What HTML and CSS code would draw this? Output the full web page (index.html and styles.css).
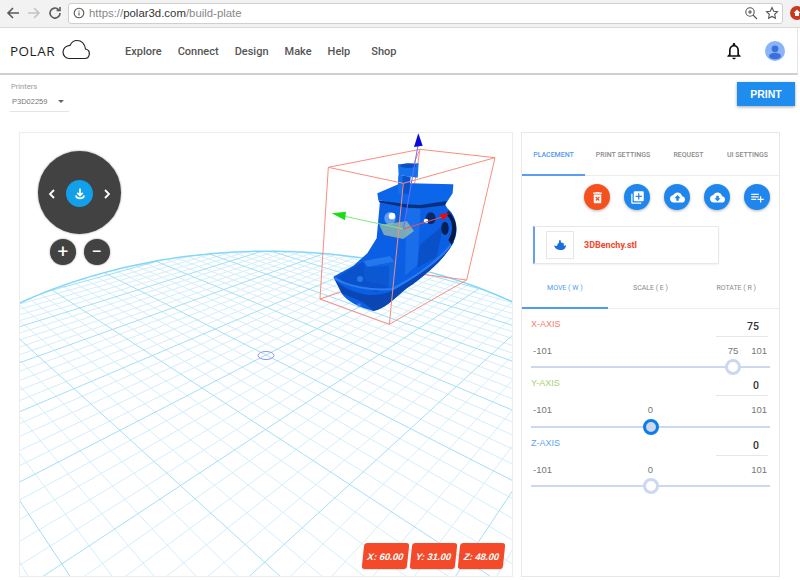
FILE: index.html
```html
<!DOCTYPE html>
<html lang="en">
<head>
<meta charset="utf-8">
<title>Polar3D build plate</title>
<link rel="stylesheet" href="styles.css">
</head>
<body>
<header class="chrome">
  <div class="chrome-nav">
    <svg class="ci" viewBox="0 0 16 16"><path d="M14 8H3M8 3L3 8l5 5" class="st-dark"/></svg>
    <svg class="ci" viewBox="0 0 16 16"><path d="M2 8h11M8 3l5 5-5 5" class="st-light"/></svg>
    <svg class="ci" viewBox="0 0 16 16"><path d="M13 8a5 5 0 1 1-1.500-3.500M13 2v3.400H9.600" class="st-dark"/></svg>
  </div>
  <div class="url">
    <svg class="info" viewBox="0 0 12 12"><circle cx="6" cy="6" r="4.800" class="st-thin"/><path d="M6 5.400v3.200M6 3.400v1" class="st-thin"/></svg>
    <span class="url-text"><span class="url-dim">https://</span>polar3d.com<span class="url-dim">/build-plate</span></span>
    <span class="url-icons">
      <svg class="ui" viewBox="0 0 14 14"><circle cx="6" cy="6" r="4.200" class="st-thin"/><path d="M9 9l4 4M4 6h4M6 4v4" class="st-thin"/></svg>
      <svg class="ui" viewBox="0 0 14 14"><path d="M7 1.600l1.700 3.600 3.800.5-2.800 2.600.7 3.900L7 10.400l-3.400 1.800.7-3.900-2.800-2.600 3.800-.5z" class="st-thin"/></svg>
    </span>
  </div>
  <div class="ext"><svg viewBox="0 0 10 10" class="ext-i"><path d="M5 1.500L8.500 5H7v3H3V5H1.500z" fill="#fff"/></svg></div>
</header>

<nav class="topnav">
  <a class="logo"><span class="logo-text">POLAR</span>
    <svg class="cloud" viewBox="0 0 28 21"><path d="M7 19.500h15.500a4.800 4.800 0 0 0 1-9.500C22.500 4.500 19 1.500 15 1.500c-3 0-5.500 1.700-7 4.800C4 6.500 1 9.500 1 13s2.800 6.500 6 6.500z"/></svg>
  </a>
  <ul class="menu">
    <li>Explore</li><li>Connect</li><li>Design</li><li>Make</li><li>Help</li><li class="menu-last">Shop</li>
  </ul>
  <svg class="bell" viewBox="0 0 24 24"><path d="M12 22c1.100 0 2-.9 2-2h-4c0 1.100.9 2 2 2zm6-6v-5c0-3.070-1.630-5.640-4.500-6.320V4c0-.83-.67-1.500-1.500-1.500s-1.500.67-1.500 1.500v.68C7.640 5.360 6 7.920 6 11v5l-2 2v1h16v-1l-2-2zm-2 1H8v-6c0-2.480 1.510-4.500 4-4.500s4 2.020 4 4.500v6z"/></svg>
  <span class="avatar"><svg viewBox="0 0 20 20"><circle cx="10" cy="10" r="10" fill="#8ab4f8"/><circle cx="10" cy="7.800" r="3.400" fill="#3b6fdc"/><ellipse cx="10" cy="15" rx="6" ry="3.200" fill="#3b6fdc"/></svg></span>
</nav>

<section class="subbar">
  <div class="printer">
    <div class="printer-label">Printers</div>
    <div class="printer-select"><span>P3D02259</span><i class="caret"></i></div>
  </div>
  <button class="print">PRINT</button>
</section>

<main class="main">
  <section class="stage">
    <svg id="plate" class="plate" viewBox="19 132 494 445">
      <g id="grid" fill="none"></g>
      <ellipse cx="266" cy="355.500" rx="8" ry="4" fill="none" stroke="#8f8fff"/>
      <g transform="translate(310 125) scale(.33333)">
        <g fill="none" stroke="#f98d80" stroke-width="3">
          <path d="M330 73L290 165M30 522L272 440L470 465M272 440L330 73"/>
        </g>
        <g class="model">
          <!-- hull -->
          <path d="M70 455L130 422L172 385L200 340L210 228L290 245L330 247L405 238L412 250C442 275 447 320 430 352C410 395 350 450 290 490C255 520 220 555 190 558C150 548 110 530 95 505Z" fill="#0b5fe4"/>
          <!-- deck -->
          <path d="M84 456L158 410L250 480L200 500L110 478Z" fill="#0a52cc"/>
          <!-- lower hull -->
          <path d="M95 505C130 520 165 530 190 558C220 555 255 520 290 490C350 450 410 395 430 352C395 400 330 450 248 498C215 510 180 515 150 505C130 500 100 490 74 462Z" fill="#0a47b4"/>
          <path d="M74 460C110 482 180 498 248 492C330 448 395 400 430 350" fill="none" stroke="#2a7cf0" stroke-width="6"/>
          <!-- box on deck -->
          <path d="M160 408L240 393L254 410L250 487L165 468Z" fill="#0c58d2"/>
          <path d="M160 408L240 393L254 410L172 426Z" fill="#2577ee"/>
          <path d="M172 426L254 410L250 487L236 484L238 422Z" fill="#0f66e2"/>
          <!-- cabin -->
          <path d="M290 250L332 250L322 420L285 452Z" fill="#1a6eea"/>
          <path d="M330 360L400 300L380 395L322 428Z" fill="#0a50c8"/>
          <!-- roof -->
          <path d="M202 205L265 178L300 175L430 178L428 205L405 240L330 247L290 243L205 225Z" fill="#0c66ea"/>
          <path d="M205 226L290 238L330 240L410 228L405 241L330 250L290 248L208 232Z" fill="#06307e"/>
          <!-- chimney -->
          <path d="M266 150L302 155L297 206L262 206Z" fill="#0a52cc"/>
          <path d="M266 150L278 152L276 206L262 206Z" fill="#1670ee"/>
          <path d="M264 118L326 115L323 158L266 150Z" fill="#1470ec"/>
          <ellipse cx="295" cy="122" rx="24" ry="7" fill="#0b50c0"/>
          <!-- openings -->
          <ellipse cx="240" cy="280" rx="17" ry="19" fill="#5d9df0"/>
          <ellipse cx="246" cy="273" rx="10" ry="10" fill="#fff"/>
          <ellipse cx="362" cy="280" rx="15" ry="18" fill="#08286a"/>
          <circle cx="348" cy="288" r="7" fill="#fff"/>
          <ellipse cx="405" cy="310" rx="11" ry="20" fill="#072054"/>
          <path d="M415 258C442 285 447 320 425 360L415 345C430 320 432 290 408 268Z" fill="#061a45"/>
          <circle cx="150" cy="462" r="9" fill="#2a78e8"/>
          <circle cx="147" cy="540" r="5" fill="#3a86ee"/>
          <path d="M208 300L290 288L312 318L280 342L222 330Z" fill="#a8c8a8" opacity=".7"/>
        </g>
        <g fill="none" stroke="#f98d80" stroke-width="3">
          <path d="M55 127L330 73L555 98L470 465L238 598L30 522ZM55 127L280 175L555 98M280 175L238 598"/>
        </g>
        <path d="M280 312L325 55" stroke="#6d6dff" stroke-width="3"/>
        <path d="M325 25L312 66L338 62Z" fill="#0a0ad8"/>
        <path d="M280 312L95 272" stroke="#7de87d" stroke-width="3"/>
        <path d="M65 265L108 260L105 286Z" fill="#1cdc1c"/>
        <path d="M280 312L400 275" stroke="#e85555" stroke-width="3"/>
        <path d="M388 268L419 264L400 286Z" fill="#ee0a0a"/>
      </g>
    </svg>

    <div class="pad">
      <button class="pad-arrow"><svg viewBox="0 0 8 12"><path d="M6 2L2 6l4 4"/></svg></button>
      <span class="pad-center"><svg viewBox="0 0 14 14"><path d="M7 1.500v6.500M4.300 5.800L7 8.500l2.700-2.700M2.800 8.500a4.300 3.700 0 0 0 8.400 0" /></svg></span>
      <button class="pad-arrow"><svg viewBox="0 0 8 12"><path d="M2 2l4 4-4 4"/></svg></button>
    </div>
    <div class="zoom-btns">
      <button class="zoom-btn">+</button>
      <button class="zoom-btn">&minus;</button>
    </div>

    <div class="badges">
      <span class="badge"><em>X: 60.00</em></span>
      <span class="badge"><em>Y: 31.00</em></span>
      <span class="badge"><em>Z: 48.00</em></span>
    </div>
  </section>

  <aside class="panel">
    <div class="tabs">
      <span class="tab tab-a active">PLACEMENT</span>
      <span class="tab tab-b">PRINT SETTINGS</span>
      <span class="tab tab-c">REQUEST</span>
      <span class="tab tab-a">UI SETTINGS</span>
    </div>
    <div class="actions">
      <button class="fab fab-red"><svg viewBox="0 0 24 24"><path d="M6 19c0 1.100.9 2 2 2h8c1.100 0 2-.9 2-2V7H6v12zm2.460-7.120l1.410-1.410L12 12.590l2.120-2.120 1.410 1.410L13.410 14l2.120 2.120-1.410 1.410L12 15.410l-2.120 2.120-1.410-1.410L10.590 14l-2.130-2.120zM15.500 4l-1-1h-5l-1 1H5v2h14V4z"/></svg></button>
      <button class="fab"><svg viewBox="0 0 24 24"><path d="M4 6H2v14c0 1.100.9 2 2 2h14v-2H4V6zm16-4H8c-1.100 0-2 .9-2 2v12c0 1.100.9 2 2 2h12c1.100 0 2-.9 2-2V4c0-1.100-.9-2-2-2zm-1 9h-4v4h-2v-4H9V9h4V5h2v4h4v2z"/></svg></button>
      <button class="fab"><svg viewBox="0 0 24 24"><path d="M19.350 10.040C18.670 6.590 15.640 4 12 4 9.110 4 6.600 5.640 5.350 8.040 2.340 8.360 0 10.910 0 14c0 3.310 2.690 6 6 6h13c2.760 0 5-2.240 5-5 0-2.640-2.050-4.780-4.650-4.960zM14 13v4h-4v-4H7l5-5 5 5h-3z"/></svg></button>
      <button class="fab"><svg viewBox="0 0 24 24"><path d="M19.350 10.040C18.670 6.590 15.640 4 12 4 9.110 4 6.600 5.640 5.350 8.040 2.340 8.360 0 10.910 0 14c0 3.310 2.690 6 6 6h13c2.760 0 5-2.240 5-5 0-2.640-2.050-4.780-4.650-4.960zM17 13l-5 5-5-5h3V9h4v4h3z"/></svg></button>
      <button class="fab"><svg viewBox="0 0 24 24"><path d="M14 10H2v2h12v-2zm0-4H2v2h12V6zm4 8v-4h-2v4h-4v2h4v4h2v-4h4v-2h-4zM2 16h8v-2H2v2z"/></svg></button>
    </div>
    <div class="file">
      <span class="thumb"><svg viewBox="0 0 14 12"><path d="M1 6.500L4 7l1-3 1 .5V1.500L7.500 1l.5 2.500 2.500.5.500 3L13 6c0 3-2 5-5 5-3 .2-6-1-7-4.500z" fill="#1a6ee0"/></svg></span>
      <span class="file-name">3DBenchy.stl</span>
    </div>
    <div class="subtabs">
      <span class="subtab active">MOVE ( W )</span>
      <span class="subtab">SCALE ( E )</span>
      <span class="subtab">ROTATE ( R )</span>
    </div>

    <div class="axis">
      <div class="axis-head"><span class="axis-name x">X-AXIS</span><span class="axis-val">75</span></div>
      <div class="scale"><span>-101</span><span class="now" style="left:84.500%">75</span><span>101</span></div>
      <div class="track"><span class="thumb-dot" style="left:84.500%"></span></div>
    </div>
    <div class="axis">
      <div class="axis-head"><span class="axis-name y">Y-AXIS</span><span class="axis-val">0</span></div>
      <div class="scale"><span>-101</span><span class="now" style="left:50%">0</span><span>101</span></div>
      <div class="track"><span class="thumb-dot focus" style="left:50%"></span></div>
    </div>
    <div class="axis">
      <div class="axis-head"><span class="axis-name z">Z-AXIS</span><span class="axis-val">0</span></div>
      <div class="scale"><span>-101</span><span class="now" style="left:50%">0</span><span>101</span></div>
      <div class="track"><span class="thumb-dot" style="left:50%"></span></div>
    </div>
  </aside>
</main>
<script src="grid.js"></script>
</body>
</html>
```

FILE: styles.css
```css
* { box-sizing: border-box; }
html, body { margin: 0; padding: 0; }
body { width: 800px; height: 580px; overflow: hidden; background: #fff; font-family: Roboto, "Liberation Sans", sans-serif; color: #444; }
button { font-family: inherit; border: 0; padding: 0; cursor: pointer; }

/* browser chrome */
.chrome { display: flex; align-items: center; height: 28px; background: #f2f2f2; border-bottom: 1px solid #d9d9d9; padding: 0 0 1px 5px; overflow: hidden; }
.chrome-nav { display: flex; gap: 5px; width: 63px; flex: none; }
.ci { width: 16px; height: 16px; fill: none; }
.st-dark { fill: none; stroke: #5a5a5a; stroke-width: 1.600; }
.st-light { fill: none; stroke: #c4c4c4; stroke-width: 1.600; }
.st-thin { fill: none; stroke: #555; stroke-width: 1.100; }
.url { display: flex; align-items: center; flex: none; width: 715px; height: 21px; background: #fff; border: 1px solid #cfcfcf; border-radius: 3px; padding-left: 4px; }
.info { width: 12px; height: 12px; margin-right: 4px; }
.url-text { font-family: "Liberation Sans", sans-serif; font-size: 11.400px; color: #333; }
.url-dim { color: #888; }
.url-icons { margin-left: auto; display: flex; gap: 7px; padding-right: 3px; }
.ui { width: 14px; height: 14px; }
.ext { width: 14px; height: 14px; margin-left: 7px; flex: none; border-radius: 50%; background: #c9381f; display: flex; align-items: center; justify-content: center; }
.ext-i { width: 10px; height: 10px; }

/* top nav */
.topnav { display: flex; align-items: center; height: 47px; width: 798px; border-bottom: 2px solid #cfcfcf; border-right: 1px solid #e6e6e6; padding-left: 10px; }
.logo { display: flex; align-items: center; gap: 7px; width: 115px; }
.logo-text { font-family: "Open Sans", sans-serif; font-size: 13.500px; font-weight: 400; letter-spacing: .5px; color: #1d1d1d; }
.cloud { width: 28px; height: 21px; margin-top: -3px; }
.cloud path { fill: none; stroke: #222; stroke-width: 1.200; }
.menu { display: flex; list-style: none; margin: 0; padding: 1px 0 0; gap: 16px; font-size: 11px; font-weight: 500; color: #555; flex: 1; }
.menu-last { margin-left: 5px; }
.bell { width: 20px; height: 20px; fill: #111; margin-right: 21px; }
.avatar { width: 20px; height: 20px; margin-right: 12px; display: block; }
.avatar svg { display: block; }

/* sub bar */
.subbar { display: flex; justify-content: space-between; height: 57px; padding: 7px 5px 0 10px; }
.printer { width: 59px; }
.printer-label { font-size: 7.500px; color: #999; padding-left: 1px; line-height: 9px; }
.printer-select { display: flex; align-items: center; justify-content: space-between; height: 20px; border-bottom: 1px solid #e4e4e4; font-family: "Liberation Sans", sans-serif; font-size: 7.500px; color: #777; padding: 0 5px 0 2px; margin-top: 1px; }
.caret { width: 0; height: 0; border: 3px solid transparent; border-top: 3px solid #666; border-bottom: 0; }
.print { width: 58px; height: 24px; background: #1f8cf0; color: #fff; font-family: "Liberation Sans", sans-serif; font-size: 10.500px; font-weight: 700; box-shadow: 0 1px 3px rgba(0,0,0,.35); }

/* stage */
.main { display: flex; gap: 8px; padding-left: 19px; height: 445px; }
.stage { position: relative; width: 494px; height: 445px; overflow: hidden; border: 1px solid #ececec; }
.plate { position: absolute; left: -1px; top: -1px; width: 494px; height: 445px; display: block; }
.model { filter: blur(.4px); }

.pad { position: absolute; left: 18px; top: 18px; width: 83px; height: 83px; border-radius: 50%; background: #424242; box-shadow: 0 0 2px rgba(0,0,0,.5); display: flex; align-items: center; justify-content: space-between; padding: 2px 10px 0; }
.pad-arrow { background: none; width: 8px; height: 12px; }
.pad-arrow svg { display: block; width: 8px; height: 12px; fill: none; stroke: #fff; stroke-width: 1.800; }
.pad-center { width: 27px; height: 27px; border-radius: 50%; background: #12a0ea; display: flex; align-items: center; justify-content: center; }
.pad-center svg { width: 14px; height: 14px; fill: none; stroke: #fff; stroke-width: 1.700; }
.zoom-btns { position: absolute; left: 30px; top: 106px; display: flex; gap: 8px; }
.zoom-btn { width: 26px; height: 26px; border-radius: 50%; background: #424242; color: #fff; font-size: 19px; line-height: 24px; font-weight: 400; box-shadow: 0 0 2px rgba(0,0,0,.5); }
.badges { position: absolute; right: 8px; bottom: 7px; display: flex; gap: 3px; }
.badge { width: 45px; height: 26px; background: #f44a2a; border-radius: 3px; transform: skewX(-6deg); display: flex; align-items: center; justify-content: center; box-shadow: 0 1px 1px rgba(0,0,0,.1); }
.badge em { font-family: "Liberation Sans", sans-serif; font-size: 9.500px; font-weight: 700; font-style: italic; color: #fff; }

/* panel */
.panel { width: 259px; height: 445px; border: 1px solid #e8e8e8; }
.tabs { display: flex; height: 43px; border-bottom: 1px solid #ececec; }
.tab { display: flex; align-items: center; justify-content: center; font-size: 7px; font-weight: 500; color: #8a8a8a; white-space: nowrap; height: 43px; }
.tab-a { width: 63px; }
.tab-b { width: 76px; }
.tab-c { width: 55px; }
.tab.active { color: #4f9bf5; border-bottom: 2px solid #5b9cf5; padding-top: 2px; }
.actions { display: flex; justify-content: flex-end; gap: 14px; padding: 8px 9px 0 0; height: 50px; }
.fab { width: 26px; height: 26px; border-radius: 50%; background: #1f86ee; box-shadow: 0 1px 3px rgba(0,0,0,.3); display: flex; align-items: center; justify-content: center; }
.fab svg { width: 15px; height: 15px; fill: #fff; }
.fab-red { background: #f4511e; }
.file { display: flex; align-items: center; width: 186px; height: 38px; margin-left: 11px; border: 1px solid #e8e8e8; border-left: 2px solid #6a9cf5; box-shadow: 0 1px 2px rgba(0,0,0,.06); padding-left: 11px; }
.thumb { width: 28px; height: 28px; border: 1px solid #e6e6e6; display: flex; align-items: center; justify-content: center; margin-right: 10px; }
.thumb svg { width: 14px; height: 12px; }
.file-name { font-size: 9px; font-weight: 700; color: #f4452c; }
.subtabs { display: flex; height: 45px; border-bottom: 1px solid #ececec; }
.subtab { flex: 1; display: flex; align-items: center; justify-content: center; font-size: 7px; color: #8a8a8a; padding-top: 4px; }
.subtab.active { color: #4f9bf5; border-bottom: 2px solid #4f9bf5; margin-bottom: -1px; }

.axis { height: 59.600px; padding: 9.500px 9px 0 9px; }
.axis-head { display: flex; justify-content: space-between; height: 18px; }
.axis-name { font-family: "Liberation Sans", sans-serif; font-size: 9px; }
.axis-name.x { color: #f77a6f; }
.axis-name.y { color: #a9cf72; }
.axis-name.z { color: #5fa3f5; }
.axis-val { width: 52px; text-align: right; padding: 1px 9px 0 0; margin-right: 2px; font-size: 10.500px; font-weight: 500; color: #333; border-bottom: 1px solid #e6e6e6; }
.scale { position: relative; display: flex; justify-content: space-between; padding: 8px 3px 0 2px; font-family: "Liberation Sans", sans-serif; font-size: 9.500px; color: #777; height: 29.500px; }
.now { position: absolute; top: 8px; transform: translateX(-50%); }
.track { position: relative; height: 2px; background: #ccd7f0; }
.thumb-dot { position: absolute; top: 1px; width: 16px; height: 16px; margin: -8px 0 0 -8px; border-radius: 50%; background: #fff; border: 3px solid #ccd7f0; }
.thumb-dot.focus { background: #ccd7f0; border-color: #0b7ceb; }
```

FILE: grid.js
```js
// Perspective plate grid: ground (u, v) mapped through a homography with
// vanishing points VR and VL, clipped to the plate's circular edge.
(function () {
  var NS = 'http://www.w3.org/2000/svg';
  var g = document.getElementById('grid');
  var a = 0.1107, b = 0.1087, R = 4.15;
  var VR = [780, 90], VL = [-254, 90], O = [266, 355];

  function project(u, v) {
    var w = a * u + b * v + 1;
    return [
      (a * VR[0] * u + b * VL[0] * v + O[0]) / w,
      (a * VR[1] * u + b * VL[1] * v + O[1]) / w
    ];
  }
  function add(points, stroke, width) {
    var p = document.createElementNS(NS, 'polyline');
    p.setAttribute('points', points.map(function (q) {
      return q[0].toFixed(1) + ',' + q[1].toFixed(1);
    }).join(' '));
    p.setAttribute('stroke', stroke);
    p.setAttribute('stroke-width', width);
    g.appendChild(p);
  }
  function chord(t, swap, stroke, width) {
    var h = Math.sqrt(R * R - t * t);
    var s = [project(swap ? -h : t, swap ? t : -h), project(swap ? h : t, swap ? t : h)];
    add(s, stroke, width);
  }
  var i, t;
  for (i = -40; i <= 40; i++) {
    t = i / 5;
    if (i % 5 === 0 || Math.abs(t) >= R) continue;
    chord(t, false, '#d4eefa', 1);
    chord(t, true, '#d4eefa', 1);
  }
  for (i = -4; i <= 4; i++) {
    chord(i, false, '#a4dff7', 1);
    chord(i, true, '#a4dff7', 1);
  }
  var ring = [];
  for (i = 0; i <= 180; i++) {
    var th = i / 180 * Math.PI * 2;
    ring.push(project(R * Math.cos(th), R * Math.sin(th)));
  }
  add(ring, '#86d6f8', 1.5);
})();
```
